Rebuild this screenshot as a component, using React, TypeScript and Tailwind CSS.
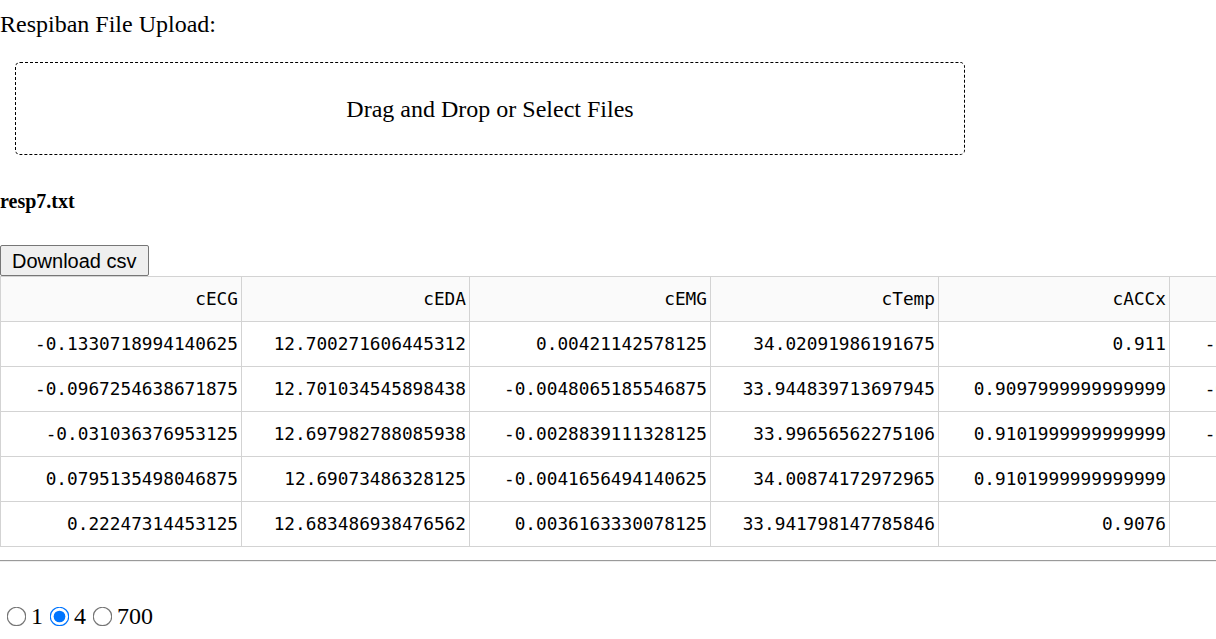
import { useState } from "react";

const columns = ["cECG", "cEDA", "cEMG", "cTemp", "cACCx", "cACCy"];
const widths = ["w-[241px]", "w-[228px]", "w-[241px]", "w-[228px]", "w-[231px]", "w-[231px]"];

const rows = [
  ["-0.1330718994140625", "12.700271606445312", "0.00421142578125", "34.02091986191675", "0.911", "-0.037600000000001"],
  ["-0.0967254638671875", "12.701034545898438", "-0.0048065185546875", "33.944839713697945", "0.9097999999999999", "-0.036400000000001"],
  ["-0.031036376953125", "12.697982788085938", "-0.0028839111328125", "33.99656562275106", "0.9101999999999999", "-0.035600000000001"],
  ["0.0795135498046875", "12.69073486328125", "-0.0041656494140625", "34.00874172972965", "0.9101999999999999", "0.0382000000001"],
  ["0.22247314453125", "12.683486938476562", "0.0036163330078125", "33.941798147785846", "0.9076", "0.0386000000001"],
];

const App = () => {
  const [rate, setRate] = useState("4");

  return (
    <div className="w-[1216px] h-[639px] overflow-hidden bg-white text-black font-['Liberation_Serif',serif]">
      <div className="text-[24px] leading-[28px] pt-[10px]">Respiban File Upload:</div>

      <div className="mx-[15px] mt-[24px] w-[950px] h-[93px] border border-dashed border-black rounded-[5px] flex items-center justify-center text-[24px]">
        Drag and Drop or Select Files
      </div>

      <div className="mt-[35px] font-bold text-[20px] leading-[23px]">resp7.txt</div>

      <button className="mt-[32px] h-[31px] px-[11px] bg-[#efefef] border border-[#767676] rounded-[2px] font-['Liberation_Sans',sans-serif] text-[20px] leading-none relative z-10 block">
        Download csv
      </button>

      <div className="w-[1216px] overflow-hidden">
        <table className="border-collapse table-fixed font-['DejaVu_Sans_Mono',monospace] text-[17.75px] w-[1400px]">
          <thead>
            <tr className="bg-[#fafafa] h-[45px]">
              {columns.map((c, i) => (
                <th key={c} className={`${widths[i]} border border-[#d3d3d3] text-right font-normal px-[3px]`}>
                  {c}
                </th>
              ))}
            </tr>
          </thead>
          <tbody>
            {rows.map((r, ri) => (
              <tr key={ri} className="h-[45px]">
                {r.map((v, ci) => (
                  <td key={ci} className={`${widths[ci]} border border-[#d3d3d3] text-right px-[3px] whitespace-nowrap`}>
                    {v}
                  </td>
                ))}
              </tr>
            ))}
          </tbody>
        </table>
      </div>

      <div className="mt-[13px] border-t border-t-[#9a9a9a] border-b border-b-[#eeeeee] h-[2px]" />

      <div className="mt-[40px] flex items-center text-[24px] leading-[28px]">
        {["1", "4", "700"].map((v) => (
          <label key={v} className="flex items-center">
            <input
              type="radio"
              name="rate"
              className="w-[17px] h-[17px] ml-[8px] mr-[6px] accent-[#0075ff] scale-[1.15]"
              checked={rate === v}
              onChange={() => setRate(v)}
            />
            <span>{v}</span>
          </label>
        ))}
      </div>
    </div>
  );
};

export default App;
